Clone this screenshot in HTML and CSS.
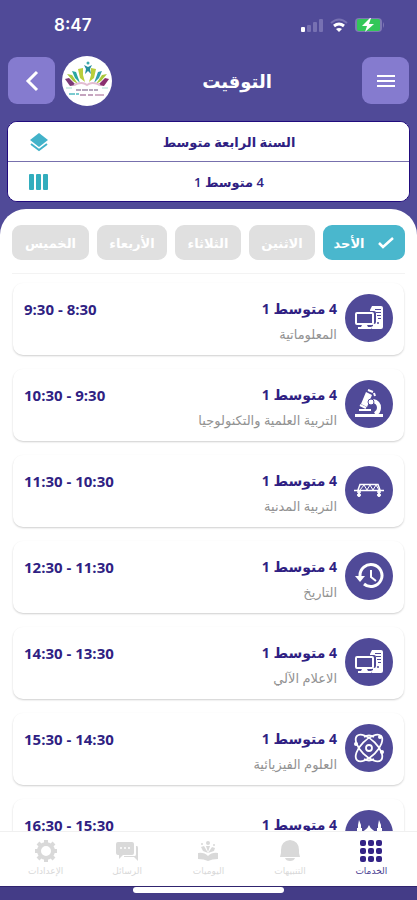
FILE: index.html
```html
<!DOCTYPE html>
<html lang="ar" dir="rtl">
<head>
<meta charset="utf-8">
<meta name="viewport" content="width=device-width, initial-scale=1">
<title>التوقيت</title>
<link rel="stylesheet" href="styles.css">
</head>
<body>
<svg class="sprite" aria-hidden="true">
  <symbol id="computer" viewBox="0 0 30 26">
    <path fill="#fff" d="M18 1h9q2 0 2 2v19q0 2-2 2h-9q-1 0-1-2l2-1v-2h1q2 0 2-2V8q0-2-2-2h-4V5z"/>
    <rect x="2" y="8" width="17" height="11" rx="1" fill="#504a98" stroke="#fff" stroke-width="2"/>
    <path fill="#fff" d="M8 20h5l1 2h3v2H4v-2h3z"/>
    <path stroke="#504a98" d="M21 4.500h6M22 7.500h5M23 10.500h4M24 13.500h3"/>
    <circle cx="24" cy="18" r="1" fill="#504a98"/>
  </symbol>
</svg>
<div class="app">
  <div class="status" dir="ltr">
    <span class="clock">8:47</span>
    <div class="signals">
      <svg width="24" height="16" viewBox="0 0 24 16" aria-hidden="true"><rect x="1" y="10" width="4" height="5" rx="1" fill="#fff"/><g fill="#7771b2"><rect x="7" y="8" width="4" height="7" rx="1"/><rect x="13" y="5" width="4" height="10" rx="1"/><rect x="19" y="2" width="4" height="13" rx="1"/></g></svg>
      <svg width="18" height="16" viewBox="0 0 18 16" fill="none" aria-hidden="true"><path d="M1 6q8-7 16 0" stroke="#7771b2" stroke-width="2"/><path d="M4 9q5-4 10 0" stroke="#fff" stroke-width="3"/><path d="M6 12q3-2 6 0l-3 3z" fill="#fff"/></svg>
      <svg width="31" height="16" viewBox="0 0 31 16" aria-hidden="true"><rect x="1" y="1" width="27" height="14" rx="4" fill="#7e78b4"/><rect x="3" y="2" width="23" height="12" rx="2" fill="#33c759"/><path d="M29 5q2 3 0 6z" fill="#7e78b4"/><path d="M16 1L8 9h5l-2 6 9-8h-5l2-6z" fill="#fff"/></svg>
    </div>
  </div>

  <header class="topbar">
    <button class="square" type="button" aria-label="القائمة"><svg width="20" height="16" viewBox="0 0 20 16" aria-hidden="true"><path d="M1 3h18M1 8h18M1 13h18" stroke="#fff" stroke-width="2"/></svg></button>
    <h1>التوقيت</h1>
    <svg class="logo" viewBox="0 0 50 50" aria-hidden="true">
      <circle cx="25" cy="25" r="25" fill="#fff"/>
      <path d="M3 23l4-1 7 7-6 1z" fill="#7b3a78"/><path d="M5 18l5 1 6 9-5-3z" fill="#a9c83b"/><path d="M10 15l4 1 4 11-5-5z" fill="#29a6a1"/><path d="M16 13l5-1v7l2 7-5-4z" fill="#b9ce3c"/>
      <path d="M47 23l-4-1-7 7 6 1z" fill="#8a316f"/><path d="M45 18l-5 1-6 9 5-3z" fill="#a9c83b"/><path d="M40 15l-4 1-4 11 5-5z" fill="#2f9dac"/><path d="M34 13l-5-1v7l-2 7 5-4z" fill="#b9ce3c"/>
      <circle cx="26" cy="7" r="1.500" fill="#3caaad"/><path d="M22 9l4 2 4-2-2 4 1 5-3-3-3 3 1-5z" fill="#278e9b"/>
      <path d="M12 29q8-4 13 0 5-4 13 0" fill="none" stroke="#e2bdd2" stroke-width="2"/>
      <path d="M14 34h5m1 0h6m1 0h4m1 0h4" stroke="#b5a6bd" stroke-width="2"/><path d="M4 32h6m30 0h6" stroke="#a5ddce"/>
      <path d="M7 38h6m1 0h3" stroke="#7bcbd0" stroke-width="2"/><path d="M18 39h6m2 0h5" stroke="#c4a3be" stroke-width="2"/><path d="M33 39h9" stroke="#d0afc6" stroke-width="2"/>
    </svg>
    <button class="square" type="button" aria-label="رجوع"><svg width="16" height="22" viewBox="0 0 16 22" fill="none" aria-hidden="true"><path d="M13 2L4 11l9 9" stroke="#fff" stroke-width="3"/></svg></button>
  </header>

  <div class="pickers">
    <button type="button"><span>السنة الرابعة متوسط</span><svg width="20" height="20" viewBox="0 0 20 20" aria-hidden="true"><path d="M10 1l9 7-9 7-9-7z" fill="#42b2c9"/><path d="M2 12l8 6 8-6" fill="none" stroke="#42b2c9" stroke-width="2"/></svg></button>
    <button type="button"><span>4 متوسط 1</span><svg width="20" height="20" viewBox="0 0 20 20" fill="#32adbd" aria-hidden="true"><rect x="0" y="2" width="5" height="16" rx="1"/><rect x="7" y="2" width="5" height="16" rx="1"/><rect x="14" y="2" width="5" height="16" rx="1"/></svg></button>
  </div>

  <main class="sheet">
    <div class="days">
      <button class="day active" type="button"><svg width="18" height="14" viewBox="0 0 18 14" fill="none" aria-hidden="true"><path d="M2 7l4 4L16 2" stroke="#fff" stroke-width="2.500"/></svg>الأحد</button>
      <button class="day" type="button">الاثنين</button>
      <button class="day" type="button">الثلاثاء</button>
      <button class="day wide" type="button">الأربعاء</button>
      <button class="day wider" type="button">الخميس</button>
    </div>
    <ul class="lessons">
      <li><span class="badge"><svg width="30" height="26" aria-hidden="true"><use href="#computer"/></svg></span><div class="info"><h2>4 متوسط 1</h2><p>المعلوماتية</p></div><time>8:30 - 9:30</time></li>
      <li><span class="badge"><svg width="30" height="30" viewBox="0 0 30 30" aria-hidden="true"><path d="M1 25h28v3H1zM5 20h12v2H5z" fill="#fff"/><path d="M12 3l6 3-5 12-6-3z" fill="#fff"/><path d="M14 1l5 2M6 16l6 3M20 4l1 3" stroke="#fff" stroke-width="2"/><path d="M19 12q6 1 6 7 0 4-4 6" fill="none" stroke="#fff" stroke-width="4"/><circle cx="17" cy="13" r="3" fill="#fff" stroke="#504a98"/></svg></span><div class="info"><h2>4 متوسط 1</h2><p>التربية العلمية والتكنولوجيا</p></div><time>9:30 - 10:30</time></li>
      <li><span class="badge"><svg width="30" height="16" viewBox="0 0 30 16" fill="none" stroke="#fff" aria-hidden="true"><path d="M0 8.500h30M4 8l2-5.500h18l2 5.500" stroke-width="1.500"/><path d="M6 8l4-5 3 5 3-5 3 5 3-5 3 5"/><path d="M5 9v4m20-4v4M3 10h4m16 0h4" stroke-width="1.500"/><circle cx="5" cy="13" r="1.500" fill="#fff"/><circle cx="25" cy="13" r="1.500" fill="#fff"/></svg></span><div class="info"><h2>4 متوسط 1</h2><p>التربية المدنية</p></div><time>10:30 - 11:30</time></li>
      <li><span class="badge"><svg width="30" height="28" viewBox="0 0 30 28" fill="none" stroke="#fff" aria-hidden="true"><path d="M6 14a11 11 0 1 1 4 8" stroke-width="3"/><path d="M1 14h10l-5 6z" fill="#fff" stroke="none"/><path d="M17 8v7l5 4" stroke-width="2"/></svg></span><div class="info"><h2>4 متوسط 1</h2><p>التاريخ</p></div><time>11:30 - 12:30</time></li>
      <li><span class="badge"><svg width="30" height="26" aria-hidden="true"><use href="#computer"/></svg></span><div class="info"><h2>4 متوسط 1</h2><p>الاعلام الآلي</p></div><time>13:30 - 14:30</time></li>
      <li><span class="badge"><svg width="32" height="32" viewBox="0 0 32 32" fill="none" stroke="#fff" stroke-width="1.800" aria-hidden="true"><ellipse cx="16" cy="16" rx="17" ry="8" transform="rotate(45 16 16)"/><ellipse cx="16" cy="16" rx="17" ry="8" transform="rotate(-45 16 16)"/><circle cx="16" cy="16" r="3"/><path d="M11 5q5-3 10 0M11 27q5 3 10 0"/><g fill="#fff" stroke="none"><circle cx="27" cy="5" r="2"/><circle cx="3" cy="12" r="2"/><circle cx="29" cy="20" r="2"/></g></svg></span><div class="info"><h2>4 متوسط 1</h2><p>العلوم الفيزيائية</p></div><time>14:30 - 15:30</time></li>
      <li><span class="badge"><svg width="28" height="28" viewBox="0 0 28 28" fill="#fff" aria-hidden="true"><path d="M14 3v2q1 3 4 5 3 2 3 5v12H7V15q0-3 3-5 3-2 4-5zM4 0l2 5v3h1v19H2V8h1V5zM24 0l2 5v3h1v19h-5V8h1V5z"/></svg></span><div class="info"><h2>4 متوسط 1</h2></div><time>15:30 - 16:30</time></li>
    </ul>
  </main>

  <nav class="tabs">
    <a class="current" href="#services"><svg width="24" height="24" viewBox="0 0 24 24" fill="#332386" aria-hidden="true"><rect x="1" y="1" width="6" height="6" rx="2"/><rect x="9" y="1" width="6" height="6" rx="2"/><rect x="17" y="1" width="6" height="6" rx="2"/><rect x="1" y="9" width="6" height="6" rx="2"/><rect x="9" y="9" width="6" height="6" rx="2"/><rect x="17" y="9" width="6" height="6" rx="2"/><rect x="1" y="17" width="6" height="6" rx="2"/><rect x="9" y="17" width="6" height="6" rx="2"/><rect x="17" y="17" width="6" height="6" rx="2"/></svg>الخدمات</a>
    <a href="#alerts"><svg width="24" height="24" viewBox="0 0 24 24" fill="currentColor" aria-hidden="true"><path d="M12 1q9 1 9 10v3l1 4H2l1-4v-3Q3 2 12 1zM7 19h10q-1 3-5 3t-5-3z"/></svg>التنبيهات</a>
    <a href="#diary"><svg width="24" height="24" viewBox="0 0 24 24" fill="currentColor" aria-hidden="true"><path d="M2 14q6-1 10 3 4-4 10-3v6q-6 0-10 2-4-2-10-2zM5 8l3-1 4 7-5-2zM19 9l-3-1-4 6 6-2z"/><circle cx="12" cy="4" r="2"/><circle cx="6" cy="5" r="1"/><circle cx="18" cy="6" r="1"/><path d="M10 7h4l-2 6z"/></svg>اليوميات</a>
    <a href="#messages"><svg width="24" height="24" viewBox="0 0 24 24" fill="currentColor" aria-hidden="true"><path d="M3 3h14q2 0 2 2v9q0 2-2 2H8l-4 4v-4H3q-2 0-2-2V5q0-2 2-2z"/><path d="M21 7h1q1 0 1 2v13l-4-4H9v-1h11q1 0 1-2z"/><g fill="#fff"><circle cx="6" cy="9" r="1"/><circle cx="10" cy="9" r="1"/><circle cx="14" cy="9" r="1"/></g></svg>الرسائل</a>
    <a href="#settings"><svg width="24" height="24" viewBox="0 0 24 24" fill="none" stroke="currentColor" aria-hidden="true"><circle cx="12" cy="12" r="7" stroke-width="4"/><path d="M12 1v3m0 16v3M1 12h3m16 0h3M4 4l3 3m10 10l3 3M20 4l-3 3M7 17l-3 3" stroke-width="4"/></svg>الإعدادات</a>
  </nav>
  <div class="home"><span></span></div>
</div>
</body>
</html>
```
FILE: styles.css
```css
* { box-sizing: border-box; }
body, h1, h2, p, ul { margin: 0; padding: 0; }
body { background: #504a98; font-family: "Open Sans", "DejaVu Sans", sans-serif; }
button { border: 0; padding: 0; font: inherit; cursor: pointer; }
svg { display: block; flex: none; }
.sprite { position: absolute; width: 0; height: 0; }
.app { height: 100vh; display: flex; flex-direction: column; overflow: hidden; }

.status { height: 57px; padding: 0 32px 7px 54px; display: flex; align-items: center; justify-content: space-between; flex: none; }
.clock { font: 600 17px/24px Inter, sans-serif; color: #fff; }
.signals { display: flex; gap: 6px; }

.topbar { display: flex; align-items: center; padding: 0 8px; height: 47px; flex: none; }
.topbar h1 { flex: 1; text-align: center; color: #fff; font-size: 18px; line-height: 32px; font-weight: 700; }
.square { width: 47px; height: 47px; border-radius: 9px; background: #857bcf; display: grid; place-items: center; }
.logo { width: 50px; height: 50px; margin-left: 7px; }

.pickers { margin: 17px 7px 0; border: 1px solid #210b7d; border-radius: 10px; background: #fff; overflow: hidden; flex: none; }
.pickers button { width: 100%; height: 39px; display: flex; align-items: center; padding: 0 0 0 21px; background: #fff; color: #301f83; font-size: 13px; font-weight: 600; }
.pickers button + button { height: 40px; border-top: 1px solid #7770ad; }
.pickers span { flex: 1; text-align: center; }

.sheet { flex: 1; min-height: 0; margin-top: 7px; padding-top: 16px; background: #fff; border-radius: 26px 26px 0 0; overflow: hidden; }
.days { display: flex; gap: 8px; margin: 0 12px; padding-bottom: 13px; border-bottom: 1px solid #f3f3f3; }
.day { flex: 66 1 0; height: 35px; border-radius: 9px; background: #e0e0e0; color: #fff; font-size: 13px; font-weight: 700; display: flex; align-items: center; justify-content: center; gap: 12px; white-space: nowrap; }
.day.wide { flex-grow: 70; }
.day.wider { flex-grow: 77; }
.day.active { flex-grow: 82; background: #4ab7cd; }

.lessons { list-style: none; display: flex; flex-direction: column; gap: 14px; padding: 9px 13px 0; }
.lessons li { height: 72px; flex: none; display: flex; align-items: flex-start; padding: 11px 11px 0 11px; border-radius: 10px; background: #fff; box-shadow: 0 1px 2px #cfcfcf; }
.badge { width: 48px; height: 48px; flex: none; border-radius: 50%; background: #504a98; display: grid; place-items: center; }
.info { flex: 1; padding: 3px 8px 0 0; }
.info h2 { color: #301f83; font-size: 14px; line-height: 24px; font-weight: 700; }
.info p { color: #929292; font-size: 13px; line-height: 26px; }
.lessons time { color: #301f83; font-size: 15px; line-height: 24px; font-weight: 700; padding-top: 3px; }

.tabs { height: 55px; flex: none; display: flex; padding: 7px 5px 0; background: #fff; border-top: 1px solid #f0f0f0; }
.tabs a { flex: 1; display: flex; flex-direction: column; align-items: center; gap: 0; color: #d9d9d9; font-size: 9px; line-height: 16px; text-decoration: none; }
.tabs .current { color: #483b91; }
.home { height: 14px; flex: none; background: #443c87; border-top: 1px solid #30246f; }
.home span { display: block; width: 36%; height: 6px; margin: 0 auto; border-radius: 3px; background: #fff; }
```
